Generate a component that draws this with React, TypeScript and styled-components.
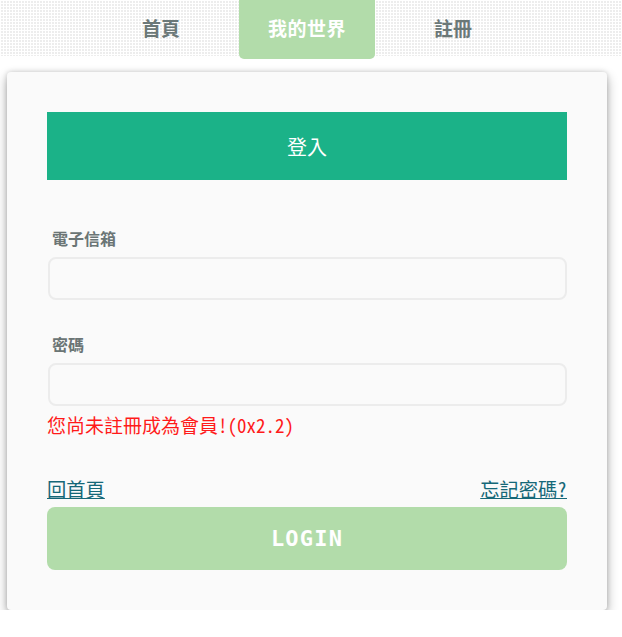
import React from "react";
import styled, { createGlobalStyle } from "styled-components";

const Global = createGlobalStyle`
  html, body { margin: 0; padding: 0; background: #ffffff; }
  body { font-family: "Noto Sans CJK TC", "Noto Sans", sans-serif; }
  * { box-sizing: border-box; }
`;

const Page = styled.div`
  width: 614px;
`;

const NavBar = styled.nav`
  width: 622px;
  height: 56px;
  background-image:
    linear-gradient(to right, #ffffff 1px, transparent 1px),
    linear-gradient(to bottom, #ffffff 1px, transparent 1px);
  background-size: 3px 3px;
  background-color: #ededed;
`;

const NavInner = styled.div`
  width: 614px;
  display: flex;
  justify-content: center;
  gap: 30px;
  align-items: flex-start;
`;

const Tab = styled.a<{ $active?: boolean }>`
  display: flex;
  align-items: center;
  justify-content: center;
  height: 59px;
  padding: 0 29px 4px;
  font-size: 19px;
  font-weight: 700;
  color: ${(p) => (p.$active ? "#ffffff" : "#6b7878")};
  background: ${(p) => (p.$active ? "#b2dcaa" : "transparent")};
  border-radius: 0 0 5px 5px;
  text-decoration: none;
  letter-spacing: ${(p) => (p.$active ? "0.5px" : "0")};
`;

const Card = styled.section`
  margin: 16px 0 0 7px;
  width: 600px;
  background: #fafafa;
  border-radius: 4px;
  padding: 40px;
  box-shadow: 0 5px 12px rgba(0, 0, 0, 0.32), 0 0 5px rgba(0, 0, 0, 0.16);
`;

const Header = styled.div`
  height: 68px;
  background: #1bb288;
  color: #ffffff;
  font-size: 20px;
  display: flex;
  align-items: center;
  justify-content: center;
`;

const Field = styled.div<{ $top: number }>`
  margin-top: ${(p) => p.$top}px;
  display: flex;
  flex-direction: column;
`;

const Label = styled.label`
  font-size: 16px;
  font-weight: 700;
  color: #6b7575;
  line-height: 22px;
  padding-left: 5px;
  margin-bottom: 8px;
`;

const Input = styled.input`
  height: 43px;
  margin-left: 1px;
  border: 2px solid #ececec;
  border-radius: 8px;
  background: #fafafa;
  outline: none;
`;

const Error = styled.div`
  margin-top: 6px;
  font-family: "Noto Sans Mono CJK TC", "DejaVu Sans Mono", "Noto Sans CJK TC", monospace;
  font-size: 19px;
  line-height: 26px;
  color: #ff1a1a;
`;

const LinkRow = styled.div`
  margin-top: 38px;
  margin-bottom: 2px;
  display: flex;
  justify-content: space-between;
  align-items: flex-end;
`;

const TextLink = styled.a`
  font-family: "Noto Sans Mono CJK TC", "DejaVu Sans Mono", "Noto Sans CJK TC", monospace;
  font-size: 19.3px;
  line-height: 26px;
  color: #156878;
  text-decoration: underline;
`;

const LoginButton = styled.button`
  margin-top: 3px;
  width: 100%;
  height: 63px;
  border: none;
  border-radius: 8px;
  background: #b2dcaa;
  color: #ffffff;
  font-family: "DejaVu Sans Mono", monospace;
  font-weight: 700;
  font-size: 22px;
  letter-spacing: 1.2px;
`;

export default function App() {
  return (
    <>
      <Global />
      <NavBar>
        <NavInner>
          <Tab>首頁</Tab>
          <Tab $active>我的世界</Tab>
          <Tab>註冊</Tab>
        </NavInner>
      </NavBar>
      <Page>
        <Card>
          <Header>登入</Header>
          <Field $top={47}>
            <Label>電子信箱</Label>
            <Input type="email" />
          </Field>
          <Field $top={33}>
            <Label>密碼</Label>
            <Input type="password" />
          </Field>
          <Error>您尚未註冊成為會員!(0x2.2)</Error>
          <LinkRow>
            <TextLink href="#">回首頁</TextLink>
            <TextLink href="#">忘記密碼?</TextLink>
          </LinkRow>
          <LoginButton>LOGIN</LoginButton>
        </Card>
      </Page>
    </>
  );
}
